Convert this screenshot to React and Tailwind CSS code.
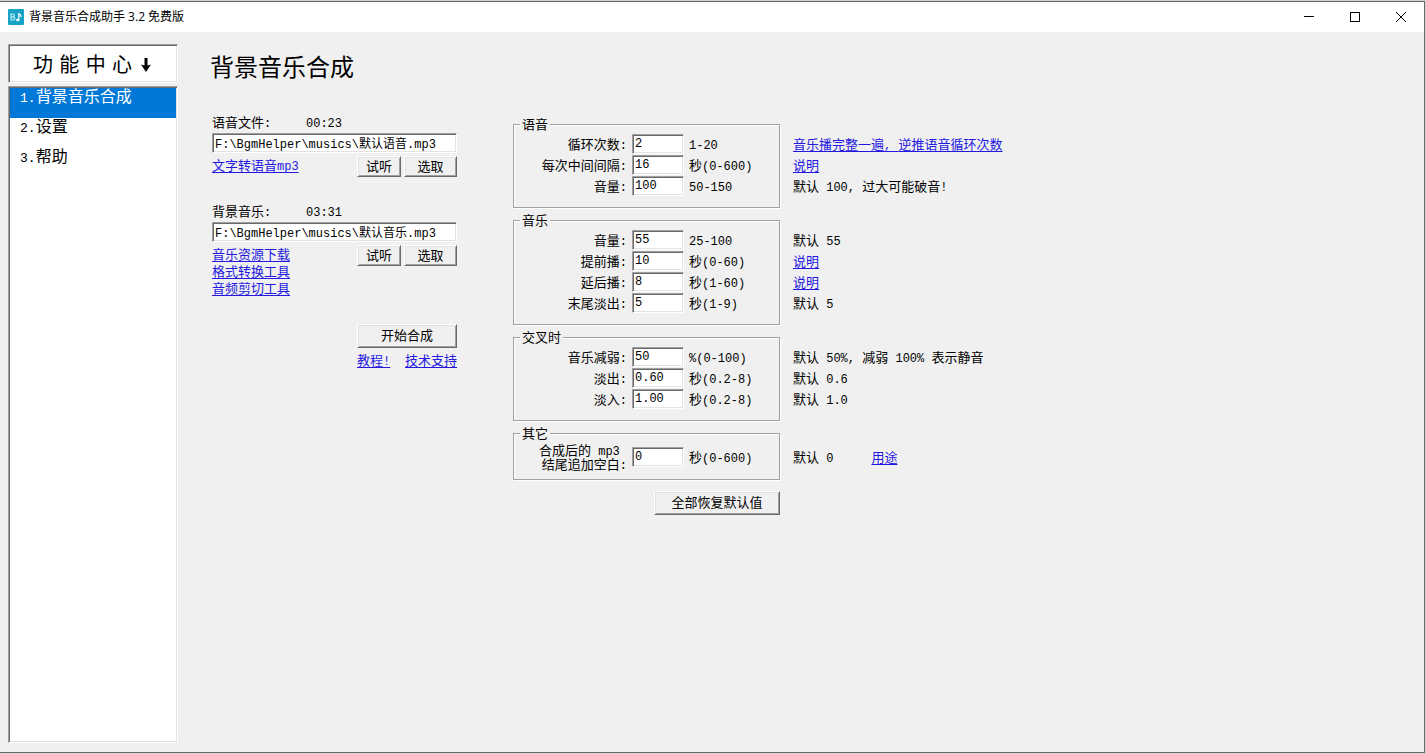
import React from "react";

const BEVEL_IN =
  "border border-t-[#a0a0a0] border-l-[#a0a0a0] border-r-white border-b-white shadow-[inset_1px_1px_0_#696969,inset_-1px_-1px_0_#e3e3e3]";
const BEVEL_OUT =
  "border border-t-white border-l-white border-r-[#696969] border-b-[#696969] shadow-[inset_1px_1px_0_#e3e3e3,inset_-1px_-1px_0_#a0a0a0]";
const FIELD =
  "h-5 bg-white px-[2px] font-['Liberation_Mono','Noto_Sans_CJK_SC',monospace] text-[12px] leading-4 text-black outline-none";

// Chinese runs are 13px wide per character, Latin runs are about 7px.
function Mixed({ text }) {
  return (
    <span className="whitespace-pre">
      {text.split(/([\x20-\x7e]+)/).map((part, i) =>
        i % 2 ? (
          <span key={i} className="font-['Liberation_Mono',monospace] text-[12px] leading-[0px]">
            {part}
          </span>
        ) : (
          part
        )
      )}
    </span>
  );
}

function Link({ text }) {
  return (
    <a href="#" className="text-[#2418e0] underline underline-offset-2">
      <Mixed text={text} />
    </a>
  );
}

function Button({ className, children }) {
  return (
    <button type="button" className={`bg-[#f0f0f0] pb-[2px] text-center leading-4 ${BEVEL_OUT} ${className}`}>
      {children}
    </button>
  );
}

function FilePicker({ id, label, duration, path, links }) {
  return (
    <section>
      <div className="flex h-[19px] items-start leading-4">
        <label htmlFor={id} className="w-[94px]">
          <Mixed text={label} />
        </label>
        <Mixed text={duration} />
      </div>
      <input id={id} type="text" defaultValue={path} className={`block w-full ${FIELD} ${BEVEL_IN}`} />
      <div className="mt-[3px] flex items-start justify-between">
        <div className="flex flex-col leading-[17px]">
          {links.map((l) => (
            <Link key={l} text={l} />
          ))}
        </div>
        <div className="flex gap-[3px]">
          <Button className="h-[21px] w-11">试听</Button>
          <Button className="h-[21px] w-[53px]">选取</Button>
        </div>
      </div>
    </section>
  );
}

const GROUPS = [
  {
    title: "语音",
    rows: [
      { id: "loop", label: ["循环次数:"], value: "2", unit: "1-20", link: "音乐播完整一遍, 逆推语音循环次数" },
      { id: "gap", label: ["每次中间间隔:"], value: "16", unit: "秒(0-600)", link: "说明" },
      { id: "voice-volume", label: ["音量:"], value: "100", unit: "50-150", note: "默认 100, 过大可能破音!" },
    ],
  },
  {
    title: "音乐",
    rows: [
      { id: "music-volume", label: ["音量:"], value: "55", unit: "25-100", note: "默认 55" },
      { id: "lead", label: ["提前播:"], value: "10", unit: "秒(0-60)", link: "说明" },
      { id: "delay", label: ["延后播:"], value: "8", unit: "秒(1-60)", link: "说明" },
      { id: "tail", label: ["末尾淡出:"], value: "5", unit: "秒(1-9)", note: "默认 5" },
    ],
  },
  {
    title: "交叉时",
    rows: [
      { id: "duck", label: ["音乐减弱:"], value: "50", unit: "%(0-100)", note: "默认 50%, 减弱 100% 表示静音" },
      { id: "fade-out", label: ["淡出:"], value: "0.60", unit: "秒(0.2-8)", note: "默认 0.6" },
      { id: "fade-in", label: ["淡入:"], value: "1.00", unit: "秒(0.2-8)", note: "默认 1.0" },
    ],
  },
  {
    title: "其它",
    rows: [
      {
        id: "blank",
        label: ["合成后的 mp3 ", "结尾追加空白:"],
        value: "0",
        unit: "秒(0-600)",
        note: "默认 0",
        link: "用途",
        tall: true,
      },
    ],
  },
];

function Group({ title, rows }) {
  return (
    <div className="flex gap-[13px]">
      <fieldset className="w-[267px] shrink-0 border border-[#a0a0a0] pt-[2px] pb-[10px] shadow-[1px_1px_0_#fff,inset_1px_1px_0_#fff]">
        <legend className="ml-[6px] h-[15px] bg-[#f0f0f0] px-[2px] leading-[13px]">{title}</legend>
        {rows.map((r) => (
          <div key={r.id} className={`flex items-center gap-[5px] ${r.tall ? "h-[26px] pt-[2px]" : "h-[21px] pb-px"}`}>
            <label htmlFor={r.id} className="flex w-[113px] flex-col items-end leading-[14px]">
              {r.label.map((line) => (
                <Mixed key={line} text={line} />
              ))}
            </label>
            <input id={r.id} type="text" defaultValue={r.value} className={`w-[52px] ${FIELD} ${BEVEL_IN}`} />
            <Mixed text={r.unit} />
          </div>
        ))}
      </fieldset>
      <div className="pt-[17px]">
        {rows.map((r) => (
          <div key={r.id} className={`flex items-center gap-[38px] ${r.tall ? "h-[26px] pt-[2px]" : "h-[21px] pb-px"}`}>
            {r.note && <Mixed text={r.note} />}
            {r.link && <Link text={r.link} />}
          </div>
        ))}
      </div>
    </div>
  );
}

function TitleBar() {
  return (
    <header className="flex h-[30px] shrink-0 items-center bg-white pl-2 font-['Open_Sans','Noto_Sans_CJK_SC',sans-serif] text-[12px]">
      <svg width="16" height="16" viewBox="0 0 16 16" aria-hidden="true">
        <rect width="16" height="16" rx="1" fill="#17a2c6" />
        <path d="M3 5v6h2.200a1.600 1.600 0 0 0 0-3.200H3h1.900a1.400 1.400 0 0 0 0-2.800z" fill="none" stroke="#b9f0fa" strokeWidth="1.200" />
        <path d="M10.800 11V4c.3 1.500 2.600 1.700 2.200 4" fill="none" stroke="#fff" strokeWidth="1.200" />
        <ellipse cx="9.800" cy="11" rx="1.700" ry="1.300" fill="#fff" />
      </svg>
      <span className="ml-[5px] flex-1">背景音乐合成助手 3.2 免费版</span>
      <button type="button" aria-label="最小化" className="flex h-full w-[46px] items-center justify-center">
        <svg width="10" height="10" viewBox="0 0 10 10" stroke="#000" shapeRendering="crispEdges">
          <path d="M0 4.500h10" />
        </svg>
      </button>
      <button type="button" aria-label="最大化" className="flex h-full w-[46px] items-center justify-center">
        <svg width="10" height="10" viewBox="0 0 10 10" fill="none" stroke="#000" shapeRendering="crispEdges">
          <path d="M.5.5h9v9h-9z" />
        </svg>
      </button>
      <button type="button" aria-label="关闭" className="flex h-full w-[46px] items-center justify-center">
        <svg width="10" height="10" viewBox="0 0 10 10" fill="none" stroke="#000">
          <path d="M0 0l10 10M10 0L0 10" />
        </svg>
      </button>
    </header>
  );
}

function Sidebar() {
  const items = ["背景音乐合成", "设置", "帮助"];
  return (
    <aside className="flex w-[170px] shrink-0 flex-col gap-[3px]">
      <h2
        className={`flex h-[39px] items-center gap-[2px] bg-white pt-[2px] pl-6 font-['DejaVu_Sans','Noto_Sans_CJK_SC',sans-serif] text-[20px] ${BEVEL_IN}`}
      >
        <span className="whitespace-pre">功 能 中 心 </span>
        <svg width="12" height="16" viewBox="0 0 12 16" aria-hidden="true">
          <path d="M4.500 1h3v7.500L11 7.500 6 15 1 7.500l3.500 1z" fill="#000" />
        </svg>
      </h2>
      <nav className={`flex-1 bg-white p-px text-[16px] ${BEVEL_IN}`}>
        {items.map((item, i) => (
          <a
            key={item}
            href="#"
            className={`block h-[30px] pl-[10px] leading-[14px] ${i === 0 ? "bg-[#0078d7] text-white" : "text-black"}`}
          >
            <span className="font-['Liberation_Mono',monospace] text-[13px] leading-[0px]">{i + 1}.</span>
            {item}
          </a>
        ))}
      </nav>
    </aside>
  );
}

export default function App() {
  return (
    <div className="flex min-h-screen flex-col bg-[#d4d4d4] py-px pr-px font-['Noto_Sans_CJK_SC',sans-serif] text-[13px] leading-4 text-black">
      <div className="flex flex-1 flex-col border-t border-r border-b border-[#696969] bg-[#f0f0f0]">
        <TitleBar />
        <div className="flex flex-1 pt-3 pb-[9px] pl-2">
          <Sidebar />
          <main className="flex-1 pt-2 pl-8">
            <h1 className="text-[24px] leading-7">背景音乐合成</h1>
            <div className="mt-[34px] flex items-start gap-14 pl-[2px]">
              <div className="w-[245px] shrink-0">
                <FilePicker
                  id="voice-file"
                  label="语音文件:"
                  duration="00:23"
                  path="F:\BgmHelper\musics\默认语音.mp3"
                  links={["文字转语音mp3"]}
                />
                <div className="mt-[26px]">
                  <FilePicker
                    id="music-file"
                    label="背景音乐:"
                    duration="03:31"
                    path="F:\BgmHelper\musics\默认音乐.mp3"
                    links={["音乐资源下载", "格式转换工具", "音频剪切工具"]}
                  />
                </div>
                <div className="mt-7 ml-auto w-[100px]">
                  <Button className="h-6 w-full">开始合成</Button>
                  <div className="mt-1 flex justify-between">
                    <Link text="教程!" />
                    <Link text="技术支持" />
                  </div>
                </div>
              </div>
              <div className="flex flex-col gap-[5px] pt-[3px]">
                {GROUPS.map((g) => (
                  <Group key={g.title} {...g} />
                ))}
                <div className="mt-[6px] flex w-[267px] justify-end">
                  <Button className="h-6 w-[126px]">全部恢复默认值</Button>
                </div>
              </div>
            </div>
          </main>
        </div>
      </div>
    </div>
  );
}
